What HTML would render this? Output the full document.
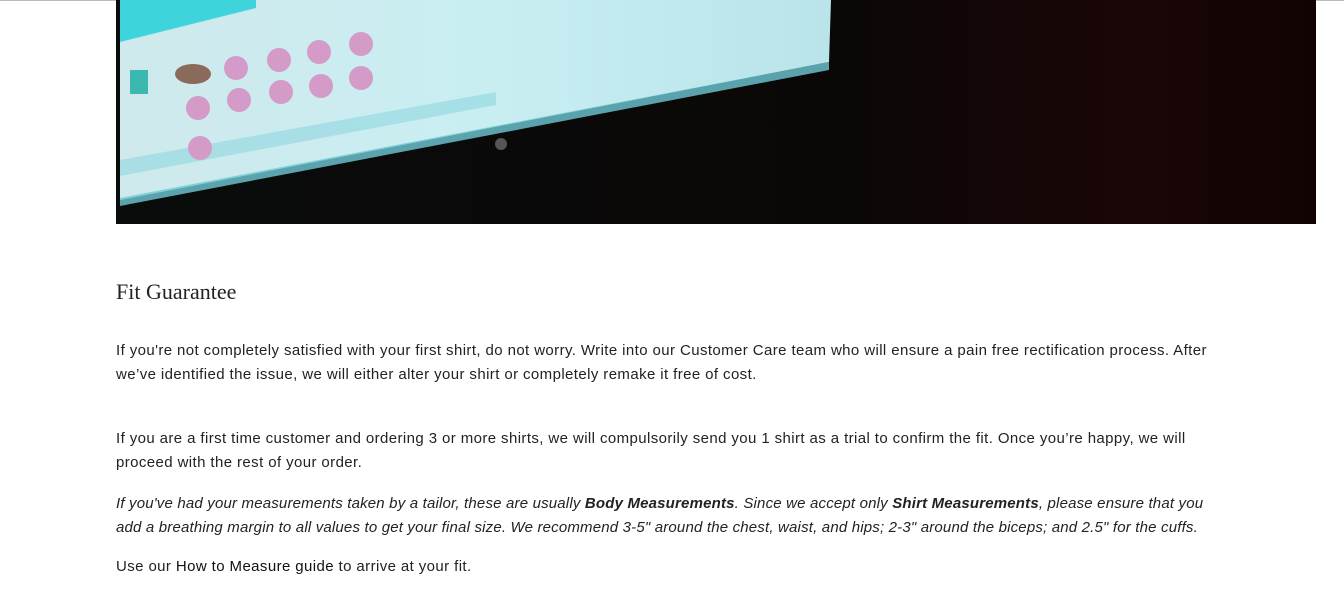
<!DOCTYPE html>
<html><head><style>
body{margin:0;background:#fff;width:1344px;height:611px;overflow:hidden;position:relative;font-family:"Liberation Sans",Arial,sans-serif;color:#222}
.top{position:absolute;left:0;top:0;width:1344px;height:1px;background:#bbb}
svg{position:absolute;left:116px;top:0}
h2{position:absolute;left:116px;top:279px;margin:0;font:22px "Liberation Serif",Georgia,serif;color:#222}
p{position:absolute;left:116px;margin:0;font-size:15px;line-height:24px;width:1105px;letter-spacing:0.4px}
.i{font-style:italic;font-size:15px;letter-spacing:0.18px;color:#222}
</style></head><body>
<div class="top"></div>
<svg width="1200" height="224" viewBox="0 0 1200 224">
<defs>
<linearGradient id="bg" x1="0" y1="0" x2="1" y2="0"><stop offset="0" stop-color="#0a0c0c"/><stop offset="0.6" stop-color="#0b0707"/><stop offset="0.85" stop-color="#1a0606"/><stop offset="1" stop-color="#120303"/></linearGradient>
<linearGradient id="sc" x1="0" y1="0" x2="1" y2="0"><stop offset="0" stop-color="#cfe9ec"/><stop offset="0.5" stop-color="#c9eef2"/><stop offset="1" stop-color="#b9e4ea"/></linearGradient>
</defs>
<rect width="1200" height="224" fill="url(#bg)"/>
<polygon points="4,0 715,0 713,62 4,200" fill="url(#sc)"/>
<polygon points="4,0 140,0 140,8 4,42" fill="#3fd4dc"/>
<polygon points="4,198 713,62 713,70 4,206" fill="#6fcbd6" opacity="0.8"/>
<polygon points="4,160 380,92 380,105 4,176" fill="#8fd7e0" opacity="0.6"/>
<g fill="#d59bc8">
<circle cx="120" cy="68" r="12"/><circle cx="163" cy="60" r="12"/><circle cx="203" cy="52" r="12"/><circle cx="245" cy="44" r="12"/>
<circle cx="82" cy="108" r="12"/><circle cx="123" cy="100" r="12"/><circle cx="165" cy="92" r="12"/><circle cx="205" cy="86" r="12"/><circle cx="245" cy="78" r="12"/>
<circle cx="84" cy="148" r="12"/>
</g>
<ellipse cx="77" cy="74" rx="18" ry="10" fill="#8a6a5a"/>
<rect x="14" y="70" width="18" height="24" fill="#3cb8b0"/>
<circle cx="385" cy="144" r="6" fill="#555"/>
</svg>
<h2>Fit Guarantee</h2>
<p style="top:339px">If you're not completely satisfied with your first shirt, do not worry. Write into our Customer Care team who will ensure a pain free rectification process. After we’ve identified the issue, we will either alter your shirt or completely remake it free of cost.</p>
<p style="top:427px">If you are a first time customer and ordering 3 or more shirts, we will compulsorily send you 1 shirt as a trial to confirm the fit. Once you’re happy, we will proceed with the rest of your order.</p>
<p class="i" style="top:492px">If you've had your measurements taken by a tailor, these are usually <b>Body Measurements</b>. Since we accept only <b>Shirt Measurements</b>, please ensure that you add a breathing margin to all values to get your final size. We recommend 3-5" around the chest, waist, and hips; 2-3" around the biceps; and 2.5" for the cuffs.</p>
<p style="top:555px">Use our <span style="color:#111">How to Measure guide</span> to arrive at your fit.</p>
</body></html>
